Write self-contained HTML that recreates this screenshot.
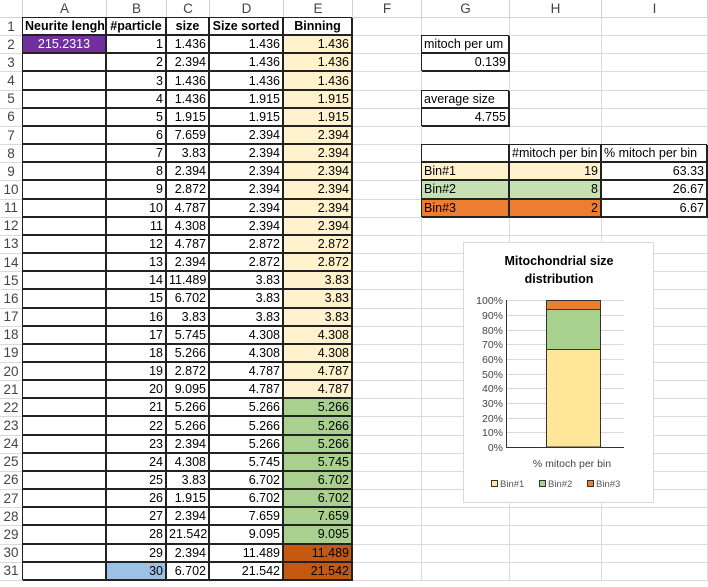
<!DOCTYPE html><html><head><meta charset="utf-8"><style>
body{margin:0;width:708px;height:587px;overflow:hidden;background:#fff;font-family:"Liberation Sans",sans-serif;font-size:12.5px;color:#000}
table{border-collapse:separate;border-spacing:0;table-layout:fixed;position:absolute;left:0;top:0;width:708px}
td{box-sizing:border-box;height:18.17px;padding:0 2px;border-right:1px solid #dadada;border-bottom:1px solid #dadada;white-space:nowrap;overflow:hidden;text-align:right;line-height:16px}
tr.h td{height:18px;text-align:center;color:#444;font-size:13.5px;border-color:#d0d0d0}
td.r{text-align:center;color:#444;font-size:13.5px;padding:0}
td.k,td.hd{border-right:2px solid #222;border-bottom:2px solid #222;box-shadow:-1px -1px 0 #222;overflow:visible}
td.hd{font-weight:bold;text-align:center;font-size:12.5px}
.y{background:#fff2cc}.g{background:#a9d08e}.o{background:#c65911}
.l{text-align:left}
#chart{position:absolute;left:463px;top:242px;width:191px;height:261px;background:#fff;border:1px solid #d9d9d9;box-sizing:border-box}
</style></head><body>
<table>
<colgroup><col style="width:23px"><col style="width:84px"><col style="width:60px"><col style="width:43px"><col style="width:74px"><col style="width:69px"><col style="width:69px"><col style="width:88px"><col style="width:92px"><col style="width:106px"></colgroup>
<tr class="h"><td></td><td>A</td><td>B</td><td>C</td><td>D</td><td>E</td><td>F</td><td>G</td><td>H</td><td>I</td></tr>
<tr><td class="r">1</td><td class="hd">Neurite lengh</td><td class="hd">#particle</td><td class="hd">size</td><td class="hd">Size sorted</td><td class="hd">Binning</td><td></td><td></td><td></td><td></td></tr>
<tr><td class="r">2</td><td class="k" style="background:#7030a0;color:#fff;text-align:center">215.2313</td><td class="k">1</td><td class="k">1.436</td><td class="k">1.436</td><td class="k y">1.436</td><td></td><td class="k l">mitoch per um</td><td></td><td></td></tr>
<tr><td class="r">3</td><td class="k"></td><td class="k">2</td><td class="k">2.394</td><td class="k">1.436</td><td class="k y">1.436</td><td></td><td class="k">0.139</td><td></td><td></td></tr>
<tr><td class="r">4</td><td class="k"></td><td class="k">3</td><td class="k">1.436</td><td class="k">1.436</td><td class="k y">1.436</td><td></td><td></td><td></td><td></td></tr>
<tr><td class="r">5</td><td class="k"></td><td class="k">4</td><td class="k">1.436</td><td class="k">1.915</td><td class="k y">1.915</td><td></td><td class="k l">average size</td><td></td><td></td></tr>
<tr><td class="r">6</td><td class="k"></td><td class="k">5</td><td class="k">1.915</td><td class="k">1.915</td><td class="k y">1.915</td><td></td><td class="k">4.755</td><td></td><td></td></tr>
<tr><td class="r">7</td><td class="k"></td><td class="k">6</td><td class="k">7.659</td><td class="k">2.394</td><td class="k y">2.394</td><td></td><td></td><td></td><td></td></tr>
<tr><td class="r">8</td><td class="k"></td><td class="k">7</td><td class="k">3.83</td><td class="k">2.394</td><td class="k y">2.394</td><td></td><td class="k"></td><td class="k l">#mitoch per bin</td><td class="k l">% mitoch per bin</td></tr>
<tr><td class="r">9</td><td class="k"></td><td class="k">8</td><td class="k">2.394</td><td class="k">2.394</td><td class="k y">2.394</td><td></td><td class="k l y">Bin#1</td><td class="k y">19</td><td class="k">63.33</td></tr>
<tr><td class="r">10</td><td class="k"></td><td class="k">9</td><td class="k">2.872</td><td class="k">2.394</td><td class="k y">2.394</td><td></td><td class="k l" style="background:#c6e0b4">Bin#2</td><td class="k" style="background:#c6e0b4">8</td><td class="k">26.67</td></tr>
<tr><td class="r">11</td><td class="k"></td><td class="k">10</td><td class="k">4.787</td><td class="k">2.394</td><td class="k y">2.394</td><td></td><td class="k l" style="background:#ed7d31">Bin#3</td><td class="k" style="background:#ed7d31">2</td><td class="k">6.67</td></tr>
<tr><td class="r">12</td><td class="k"></td><td class="k">11</td><td class="k">4.308</td><td class="k">2.394</td><td class="k y">2.394</td><td></td><td></td><td></td><td></td></tr>
<tr><td class="r">13</td><td class="k"></td><td class="k">12</td><td class="k">4.787</td><td class="k">2.872</td><td class="k y">2.872</td><td></td><td></td><td></td><td></td></tr>
<tr><td class="r">14</td><td class="k"></td><td class="k">13</td><td class="k">2.394</td><td class="k">2.872</td><td class="k y">2.872</td><td></td><td></td><td></td><td></td></tr>
<tr><td class="r">15</td><td class="k"></td><td class="k">14</td><td class="k">11.489</td><td class="k">3.83</td><td class="k y">3.83</td><td></td><td></td><td></td><td></td></tr>
<tr><td class="r">16</td><td class="k"></td><td class="k">15</td><td class="k">6.702</td><td class="k">3.83</td><td class="k y">3.83</td><td></td><td></td><td></td><td></td></tr>
<tr><td class="r">17</td><td class="k"></td><td class="k">16</td><td class="k">3.83</td><td class="k">3.83</td><td class="k y">3.83</td><td></td><td></td><td></td><td></td></tr>
<tr><td class="r">18</td><td class="k"></td><td class="k">17</td><td class="k">5.745</td><td class="k">4.308</td><td class="k y">4.308</td><td></td><td></td><td></td><td></td></tr>
<tr><td class="r">19</td><td class="k"></td><td class="k">18</td><td class="k">5.266</td><td class="k">4.308</td><td class="k y">4.308</td><td></td><td></td><td></td><td></td></tr>
<tr><td class="r">20</td><td class="k"></td><td class="k">19</td><td class="k">2.872</td><td class="k">4.787</td><td class="k y">4.787</td><td></td><td></td><td></td><td></td></tr>
<tr><td class="r">21</td><td class="k"></td><td class="k">20</td><td class="k">9.095</td><td class="k">4.787</td><td class="k y">4.787</td><td></td><td></td><td></td><td></td></tr>
<tr><td class="r">22</td><td class="k"></td><td class="k">21</td><td class="k">5.266</td><td class="k">5.266</td><td class="k g">5.266</td><td></td><td></td><td></td><td></td></tr>
<tr><td class="r">23</td><td class="k"></td><td class="k">22</td><td class="k">5.266</td><td class="k">5.266</td><td class="k g">5.266</td><td></td><td></td><td></td><td></td></tr>
<tr><td class="r">24</td><td class="k"></td><td class="k">23</td><td class="k">2.394</td><td class="k">5.266</td><td class="k g">5.266</td><td></td><td></td><td></td><td></td></tr>
<tr><td class="r">25</td><td class="k"></td><td class="k">24</td><td class="k">4.308</td><td class="k">5.745</td><td class="k g">5.745</td><td></td><td></td><td></td><td></td></tr>
<tr><td class="r">26</td><td class="k"></td><td class="k">25</td><td class="k">3.83</td><td class="k">6.702</td><td class="k g">6.702</td><td></td><td></td><td></td><td></td></tr>
<tr><td class="r">27</td><td class="k"></td><td class="k">26</td><td class="k">1.915</td><td class="k">6.702</td><td class="k g">6.702</td><td></td><td></td><td></td><td></td></tr>
<tr><td class="r">28</td><td class="k"></td><td class="k">27</td><td class="k">2.394</td><td class="k">7.659</td><td class="k g">7.659</td><td></td><td></td><td></td><td></td></tr>
<tr><td class="r">29</td><td class="k"></td><td class="k">28</td><td class="k">21.542</td><td class="k">9.095</td><td class="k g">9.095</td><td></td><td></td><td></td><td></td></tr>
<tr><td class="r">30</td><td class="k"></td><td class="k">29</td><td class="k">2.394</td><td class="k">11.489</td><td class="k o">11.489</td><td></td><td></td><td></td><td></td></tr>
<tr><td class="r">31</td><td class="k"></td><td class="k" style="background:#9bc2e6">30</td><td class="k">6.702</td><td class="k">21.542</td><td class="k o">21.542</td><td></td><td></td><td></td><td></td></tr>
</table>
<div id="chart">
<svg width="191" height="261" viewBox="0 0 191 261" font-family="Liberation Sans, sans-serif">
<text x="95" y="22" font-size="12.5" font-weight="bold" text-anchor="middle">Mitochondrial size</text>
<text x="95" y="40" font-size="12.5" font-weight="bold" text-anchor="middle">distribution</text>
<g stroke="#d9d9d9" stroke-width="1">
<line x1="42" x2="160" y1="57.5" y2="57.5"/><line x1="42" x2="160" y1="72.5" y2="72.5"/><line x1="42" x2="160" y1="87.5" y2="87.5"/><line x1="42" x2="160" y1="101.5" y2="101.5"/><line x1="42" x2="160" y1="116.5" y2="116.5"/><line x1="42" x2="160" y1="131.5" y2="131.5"/><line x1="42" x2="160" y1="145.5" y2="145.5"/><line x1="42" x2="160" y1="160.5" y2="160.5"/><line x1="42" x2="160" y1="175.5" y2="175.5"/><line x1="42" x2="160" y1="189.5" y2="189.5"/></g>
<rect x="82.5" y="106.5" width="54" height="97.5" fill="#ffe699" stroke="#333"/>
<rect x="82.5" y="66.5" width="54" height="40" fill="#a9d18e" stroke="#333"/>
<rect x="82.5" y="57.5" width="54" height="9" fill="#ed7d31" stroke="#333"/>
<line x1="42.5" x2="42.5" y1="57" y2="204.5" stroke="#333"/><line x1="42" x2="160" y1="204.5" y2="204.5" stroke="#333"/>
<g font-size="10.5" fill="#444" text-anchor="end">
<text x="39" y="61">100%</text><text x="39" y="76">90%</text><text x="39" y="91">80%</text><text x="39" y="105">70%</text><text x="39" y="120">60%</text><text x="39" y="135">50%</text><text x="39" y="149">40%</text><text x="39" y="164">30%</text><text x="39" y="179">20%</text><text x="39" y="193">10%</text><text x="39" y="208">0%</text></g>
<text x="108" y="224" font-size="10.5" fill="#444" text-anchor="middle">% mitoch per bin</text>
<g font-size="9.5" fill="#555">
<rect x="27.5" y="237.5" width="6" height="6" fill="#ffe699" stroke="#333"/><text x="36" y="244">Bin#1</text>
<rect x="75.5" y="237.5" width="6" height="6" fill="#a9d18e" stroke="#333"/><text x="84" y="244">Bin#2</text>
<rect x="123.5" y="237.5" width="6" height="6" fill="#ed7d31" stroke="#333"/><text x="132" y="244">Bin#3</text></g>
</svg></div>
</body></html>
